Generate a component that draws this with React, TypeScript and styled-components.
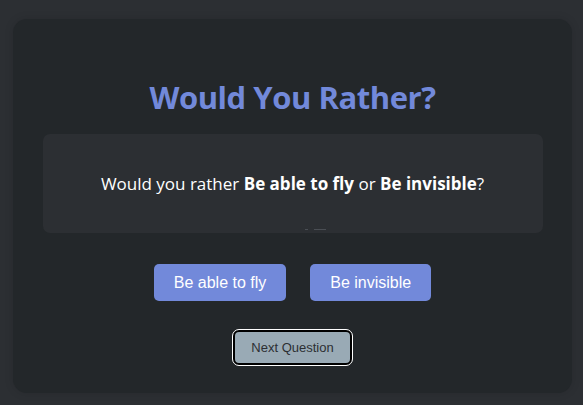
import React from 'react';
import styled, { createGlobalStyle } from 'styled-components';

const Blurple = '#7289da';

const GlobalStyle = createGlobalStyle`
    html, body {
        margin: 0;
        background-color: #2c2f33;
    }
`;

const Page = styled.div`
    padding: 19px 11px 12px 13px;
    box-sizing: border-box;
    height: 405px;
`;

const Card = styled.div`
    background-color: #23272a;
    border-radius: 14px;
    box-shadow: 0 0 10px rgba(0, 0, 0, 0.12);
    height: 374px;
    box-sizing: border-box;
    padding: 56px 0 0;
    display: flex;
    flex-direction: column;
    align-items: center;
`;

const Title = styled.h1`
    margin: 0 0 15px;
    font-family: 'Open Sans', sans-serif;
    font-weight: 700;
    font-size: 31px;
    line-height: 44px;
    color: ${Blurple};
    letter-spacing: -0.45px;
`;

const QuestionBox = styled.div`
    width: 500px;
    position: relative;
    background-color: #2c2f33;
    border-radius: 7px;
    height: 99px;
    display: flex;
    align-items: center;
    justify-content: center;
    font-family: 'Open Sans', sans-serif;
    font-size: 17px;
    color: #ffffff;

    b {
        font-weight: 700;
    }
`;

const Dashes = styled.div`
    position: absolute;
    bottom: 3px;
    left: 50%;
    display: flex;
    gap: 6px;
    transform: translateX(12px);

    span {
        height: 1px;
        background-color: #4a4e54;
    }
`;

const Choices = styled.div`
    display: flex;
    gap: 24px;
    margin-top: 31px;
`;

const ChoiceButton = styled.button`
    height: 37px;
    padding: 0 20px;
    border: none;
    border-radius: 5px;
    background-color: ${Blurple};
    color: #fff;
    font-family: 'Liberation Sans', Arial, sans-serif;
    font-size: 16px;
`;

const NextButton = styled.button`
    margin-top: 29px;
    height: 35px;
    padding: 0 16px;
    border: 2px solid #000;
    outline: 1px solid #fff;
    border-radius: 6px;
    background-color: #99aab5;
    color: #2c2f33;
    font-family: 'Liberation Sans', Arial, sans-serif;
    font-size: 13px;
`;

export default function App() {
    return (
        <>
            <GlobalStyle />
            <Page>
                <Card>
                    <Title>Would You Rather?</Title>
                    <QuestionBox>
                        <span>
                            Would you rather <b>Be able to fly</b> or <b>Be invisible</b>?
                        </span>
                        <Dashes>
                            <span style={{ width: 3 }} />
                            <span style={{ width: 12 }} />
                        </Dashes>
                    </QuestionBox>
                    <Choices>
                        <ChoiceButton>Be able to fly</ChoiceButton>
                        <ChoiceButton>Be invisible</ChoiceButton>
                    </Choices>
                    <NextButton>Next Question</NextButton>
                </Card>
            </Page>
        </>
    );
}
